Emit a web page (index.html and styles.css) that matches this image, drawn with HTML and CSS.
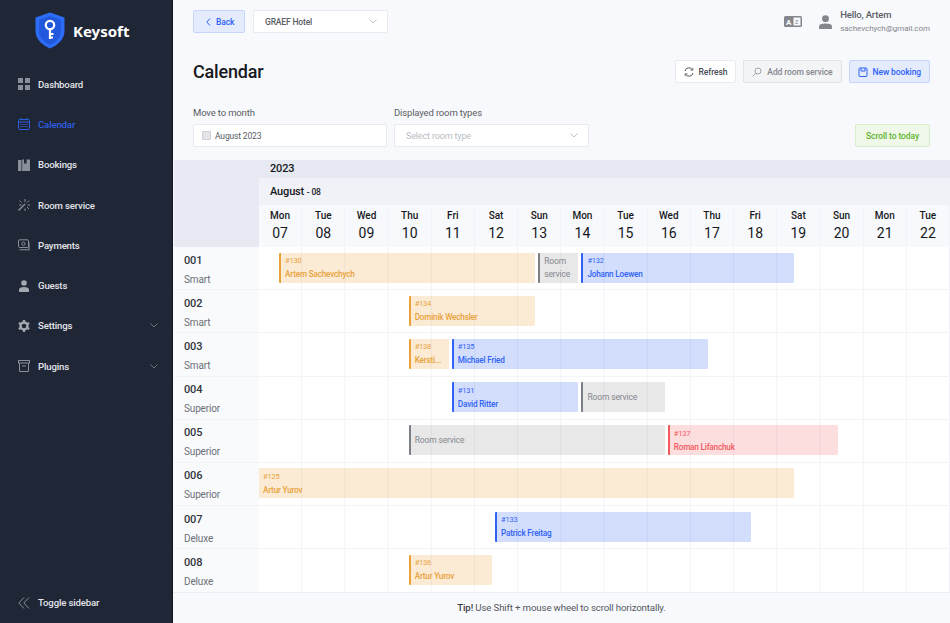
FILE: index.html
```html
<!DOCTYPE html>
<html lang="en">
<head>
  <meta charset="UTF-8">
  <title>Keysoft - Calendar</title>
  <link rel="stylesheet" href="styles.css">
</head>
<body>
  <aside class="sidebar">
    <div class="logo">
      <svg width="30" height="37" viewBox="0 0 30 37">
        <path d="M15 0.5 L29.5 5.5 V19 C29.5 27 23 33 15 36.5 C7 33 0.5 27 0.5 19 V5.5 Z" fill="#2c6cf6"/>
        <path d="M15 4 L26 8 V19 C26 25.5 21 30 15 33 C9 30 4 25.5 4 19 V8 Z" fill="#2258dc"/>
        <circle cx="15" cy="13" r="4.2" fill="none" stroke="#fff" stroke-width="2.2"/>
        <path d="M15 17 V27 M15 22 H18.5 M15 25.5 H18" fill="none" stroke="#fff" stroke-width="2.2"/>
      </svg>
      <span class="logo-text">Keysoft</span>
    </div>
    <nav class="nav">
      <a class="nav-item">
        <svg class="nav-icon" viewBox="0 0 12 12" fill="#8a8f9a"><rect width="5" height="5"/><rect x="7" width="5" height="5"/><rect y="7" width="5" height="5"/><rect x="7" y="7" width="5" height="5"/></svg>
        Dashboard
      </a>
      <a class="nav-item active">
        <svg class="nav-icon" viewBox="0 0 12 12" fill="none" stroke="#2f5fe0"><rect x="0.5" y="1.5" width="11" height="10" rx="1"/><path d="M0.5 4 H11.5 M3 0 V2 M9 0 V2"/><path d="M2.5 6.5 H9.5 M2.5 8.5 H9.5" stroke-dasharray="1 1"/></svg>
        Calendar
      </a>
      <a class="nav-item">
        <svg class="nav-icon" viewBox="0 0 12 12" fill="#8a8f9a"><path d="M0 1 H3.5 V12 H0 Z M4.2 0.5 H6 V5 L7.3 4 L8.6 5 V0.5 H12 V12 H4.2 Z"/></svg>
        Bookings
      </a>
      <a class="nav-item">
        <svg class="nav-icon" viewBox="0 0 12 12" fill="none" stroke="#8a8f9a"><path d="M7 5 L0.5 11.5" stroke-width="1.4"/><path d="M7 0 V3 M11 1.5 L9 3.5 M12 6 H9.5 M11 10 L9 8 M7 12 V9.5 M1.5 1.5 L3.5 3.5 M1 6 H3.5"/></svg>
        Room service
      </a>
      <a class="nav-item">
        <svg class="nav-icon" viewBox="0 0 12 12" fill="none" stroke="#8a8f9a"><rect x="0.5" y="0.8" width="10" height="7.7" rx="1.2"/><circle cx="5.5" cy="4.7" r="1.6"/><path d="M1.5 10.8 H11 V3.5" stroke-width="1.1"/></svg>
        Payments
      </a>
      <a class="nav-item">
        <svg class="nav-icon" viewBox="0 0 12 12" fill="#a4a8b0"><circle cx="6" cy="3" r="2.8"/><path d="M1 12 V9.5 C1 8 3 7 6 7 C9 7 11 8 11 9.5 V12 Z"/></svg>
        Guests
      </a>
      <a class="nav-item">
        <svg class="nav-icon" viewBox="0 0 12 12"><circle cx="6" cy="6" r="3.5" fill="none" stroke="#a4a8b0" stroke-width="2.4"/><path d="M6 0 V2 M6 10 V12 M0.8 3 L2.6 4 M9.4 8 L11.2 9 M0.8 9 L2.6 8 M9.4 4 L11.2 3" stroke="#a4a8b0" stroke-width="2.2"/></svg>
        Settings
        <svg class="nav-chevron" viewBox="0 0 8 5" fill="none" stroke="#6f7480"><path d="M0.5 0.5 L4 4 L7.5 0.5"/></svg>
      </a>
      <a class="nav-item">
        <svg class="nav-icon" viewBox="0 0 12 12" fill="none" stroke="#8a8f9a"><rect x="0.5" y="0.5" width="11" height="2.5"/><path d="M1.5 3 V11.5 H10.5 V3 M4 6 H8"/></svg>
        Plugins
        <svg class="nav-chevron" viewBox="0 0 8 5" fill="none" stroke="#6f7480"><path d="M0.5 0.5 L4 4 L7.5 0.5"/></svg>
      </a>
    </nav>
    <a class="nav-item">
      <svg class="nav-icon" viewBox="0 0 12 12" fill="none" stroke="#8a8f9a"><path d="M6 0.5 L0.8 6 L6 11.5 M11 0.5 L5.8 6 L11 11.5"/></svg>
      Toggle sidebar
    </a>
  </aside>

  <main class="main">
    <header class="topbar">
      <button class="btn btn-blue btn-back">
        <svg class="btn-icon-sm" viewBox="0 0 5 8" fill="none" stroke="#2f62f5"><path d="M4 0.5 L0.8 4 L4 7.5"/></svg>
        Back
      </button>
      <div class="select select-hotel">
        <span>GRAEF Hotel</span>
        <svg class="select-chevron" viewBox="0 0 8 5" fill="none" stroke="#9ea3ad" stroke-width="0.7"><path d="M0.5 0.5 L4 4 L7.5 0.5"/></svg>
      </div>
      <div class="spacer"></div>
      <svg class="lang-icon" width="18" height="11" viewBox="0 0 18 11"><rect width="18" height="11" rx="1.5" fill="#85878d"/><rect x="9.5" y="1.5" width="7" height="8" fill="#f8f9fc"/><text x="2" y="8.5" font-size="8" font-weight="700" fill="#fff" font-family="Roboto">A</text><text x="11" y="8" font-size="6.5" fill="#85878d" font-family="Roboto">z</text></svg>
      <svg class="user-icon" width="13" height="14" viewBox="0 0 12 13" fill="#85878d"><circle cx="6" cy="3.4" r="3.2"/><path d="M0 13 V10.5 C0 9 2 8 6 8 C10 8 12 9 12 10.5 V13 Z"/></svg>
      <div class="user">
        <div class="user-name">Hello, Artem</div>
        <div class="user-mail">sachevchych@gmail.com</div>
      </div>
    </header>

    <section class="page-head">
      <h1 class="title">Calendar</h1>
      <div class="actions">
        <button class="btn">
          <svg class="btn-icon" viewBox="0 0 10 10" fill="none" stroke="#55585f"><path d="M1 4 A4 4 0 0 1 8.5 3 M9 6 A4 4 0 0 1 1.5 7"/><path d="M8.8 0.8 V3.2 H6.5 M1.2 9.2 V6.8 H3.5" stroke-width="0.8"/></svg>
          Refresh
        </button>
        <button class="btn btn-gray">
          <svg class="btn-icon" viewBox="0 0 10 10" fill="none" stroke="#a2a4a9"><circle cx="6" cy="4" r="3"/><path d="M3.8 6.2 L0.5 9.5"/></svg>
          Add room service
        </button>
        <button class="btn btn-blue">
          <svg class="btn-icon" viewBox="0 0 10 10" fill="none" stroke="#2f62f5"><rect x="1" y="1" width="8" height="8.5" rx="1"/><path d="M3 1 V4 H7 V1"/></svg>
          New booking
        </button>
      </div>
    </section>

    <section class="filters">
      <div class="field field-month">
        <label class="field-label">Move to month</label>
        <div class="select">
          <span class="box-icon"></span>
          <span>August 2023</span>
        </div>
      </div>
      <div class="field field-types">
        <label class="field-label">Displayed room types</label>
        <div class="select select-empty">
          <span>Select room type</span>
          <svg class="select-chevron" viewBox="0 0 8 5" fill="none" stroke="#9ea3ad" stroke-width="0.7"><path d="M0.5 0.5 L4 4 L7.5 0.5"/></svg>
        </div>
      </div>
      <div class="spacer"></div>
      <button class="btn btn-green">Scroll to today</button>
    </section>

    <section class="calendar">
      <div class="cal-head">
        <div class="cal-corner"></div>
        <div class="cal-dates">
          <div class="cal-year">2023</div>
          <div class="cal-month">August <small>- 08</small></div>
          <div class="cal-days">
            <div class="day"><b>Mon</b><span>07</span></div>
            <div class="day"><b>Tue</b><span>08</span></div>
            <div class="day"><b>Wed</b><span>09</span></div>
            <div class="day"><b>Thu</b><span>10</span></div>
            <div class="day"><b>Fri</b><span>11</span></div>
            <div class="day"><b>Sat</b><span>12</span></div>
            <div class="day"><b>Sun</b><span>13</span></div>
            <div class="day"><b>Mon</b><span>14</span></div>
            <div class="day"><b>Tue</b><span>15</span></div>
            <div class="day"><b>Wed</b><span>16</span></div>
            <div class="day"><b>Thu</b><span>17</span></div>
            <div class="day"><b>Fri</b><span>18</span></div>
            <div class="day"><b>Sat</b><span>19</span></div>
            <div class="day"><b>Sun</b><span>20</span></div>
            <div class="day"><b>Mon</b><span>21</span></div>
            <div class="day"><b>Tue</b><span>22</span></div>
          </div>
        </div>
      </div>

      <div class="cal-row">
        <div class="room"><b>001</b><span>Smart</span></div>
        <div class="track">
          <div class="bar orange" style="grid-column: 2 / 14"><i>#130</i><b>Artem Sachevchych</b></div>
          <div class="bar gray wrap" style="grid-column: 14 / 16">Room service</div>
          <div class="bar blue" style="grid-column: 16 / 26"><i>#132</i><b>Johann Loewen</b></div>
        </div>
      </div>
      <div class="cal-row">
        <div class="room"><b>002</b><span>Smart</span></div>
        <div class="track">
          <div class="bar orange" style="grid-column: 8 / 14"><i>#134</i><b>Dominik Wechsler</b></div>
        </div>
      </div>
      <div class="cal-row">
        <div class="room"><b>003</b><span>Smart</span></div>
        <div class="track">
          <div class="bar orange" style="grid-column: 8 / 10"><i>#138</i><b>Kersti...</b></div>
          <div class="bar blue" style="grid-column: 10 / 22"><i>#135</i><b>Michael Fried</b></div>
        </div>
      </div>
      <div class="cal-row">
        <div class="room"><b>004</b><span>Superior</span></div>
        <div class="track">
          <div class="bar blue" style="grid-column: 10 / 16"><i>#131</i><b>David Ritter</b></div>
          <div class="bar gray" style="grid-column: 16 / 20">Room service</div>
        </div>
      </div>
      <div class="cal-row">
        <div class="room"><b>005</b><span>Superior</span></div>
        <div class="track">
          <div class="bar gray" style="grid-column: 8 / 20">Room service</div>
          <div class="bar red" style="grid-column: 20 / 28"><i>#137</i><b>Roman Lifanchuk</b></div>
        </div>
      </div>
      <div class="cal-row">
        <div class="room"><b>006</b><span>Superior</span></div>
        <div class="track">
          <div class="bar orange cut" style="grid-column: 1 / 26"><i>#125</i><b>Artur Yurov</b></div>
        </div>
      </div>
      <div class="cal-row">
        <div class="room"><b>007</b><span>Deluxe</span></div>
        <div class="track">
          <div class="bar blue" style="grid-column: 12 / 24"><i>#133</i><b>Patrick Freitag</b></div>
        </div>
      </div>
      <div class="cal-row">
        <div class="room"><b>008</b><span>Deluxe</span></div>
        <div class="track">
          <div class="bar orange" style="grid-column: 8 / 12"><i>#136</i><b>Artur Yurov</b></div>
        </div>
      </div>
    </section>

    <footer class="tip"><b>Tip!</b>&nbsp;Use Shift + mouse wheel to scroll horizontally.</footer>
  </main>
</body>
</html>
```

FILE: styles.css
```css
* { box-sizing: border-box; }

html, body { height: 100%; margin: 0; }

body {
  display: flex;
  overflow: hidden;
  font-family: Roboto, "Noto Sans", sans-serif;
  font-size: 10px;
  letter-spacing: -0.15px;
  color: #3d4047;
  background: #f8f9fc;
}

/* sidebar */
.sidebar {
  display: flex;
  flex-direction: column;
  flex: 0 0 173px;
  padding-top: 12px;
  background: #1f2636;
  border-right: 1px solid #12151d;
}
.logo { display: flex; align-items: center; gap: 8px; padding-left: 35px; height: 37px; }
.logo-text { font-family: "Noto Sans", sans-serif; font-size: 15px; font-weight: 700; letter-spacing: 0; color: #fff; }
.nav { display: flex; flex-direction: column; margin-top: 15px; flex: 1; }
.nav-item {
  display: flex;
  align-items: center;
  gap: 8px;
  height: 40.3px;
  padding: 0 14px 0 18px;
  font-size: 9.6px;
  font-weight: 500;
  color: #e3e5ea;
}
.nav-item.active { color: #2f5fe0; }
.nav-icon { width: 12px; height: 12px; flex: none; }
.nav-chevron { width: 8px; height: 5px; margin-left: auto; }

/* main */
.main { display: flex; flex-direction: column; flex: 1; min-width: 0; }
.spacer { flex: 1; }

.topbar { display: flex; align-items: center; height: 43px; padding: 0 20px; }
.btn {
  display: flex;
  align-items: center;
  gap: 5px;
  height: 23px;
  padding: 0 8px;
  font: 500 8.5px Roboto, "Noto Sans", sans-serif;
  letter-spacing: -0.1px;
  color: #4a4d54;
  background: #fff;
  border: 1px solid #e8eaf0;
  border-radius: 2px;
}
.btn-blue { color: #2f62f5; background: #e3ebfd; border-color: #c5d5fb; }
.btn-gray { color: #85878d; background: #f3f4f6; border-color: #e2e3e7; }
.btn-green { width: 75px; justify-content: center; padding: 0; color: #62b52f; background: #eff8e9; border-color: #d6eecb; }
.btn-back { width: 52px; padding-left: 12px; margin-right: 8px; }
.btn-icon { width: 10px; height: 10px; flex: none; }
.btn-icon-sm { width: 5px; height: 8px; flex: none; }

.select {
  display: flex;
  align-items: center;
  gap: 4px;
  height: 23px;
  padding: 0 8px;
  font-size: 8.5px;
  color: #5a5d64;
  background: #fff;
  border: 1px solid #e8eaf0;
  border-radius: 2px;
}
.select-hotel { width: 135px; padding-left: 11px; font-weight: 500; }
.select-empty { padding-left: 11px; font-size: 9px; color: #b9bcc4; }
.select-chevron { width: 8px; height: 5px; margin-left: auto; margin-right: 2px; }
.box-icon { width: 9px; height: 9px; background: #e4e5e9; border: 1px solid #cfd1d6; border-radius: 1px; }

.lang-icon { margin-right: 17px; }
.user-icon { margin-right: 8px; }
.user-name { font-size: 9.5px; font-weight: 500; color: #5a5d64; line-height: 14px; }
.user-mail { font-size: 8px; letter-spacing: -0.05px; color: #85878d; line-height: 14px; }

.page-head { display: flex; align-items: center; justify-content: space-between; height: 23px; margin-top: 17px; padding: 0 20px; }
.title { margin: 0; font-size: 18px; font-weight: 500; letter-spacing: -0.2px; color: #17191d; }
.actions { display: flex; gap: 7px; }

.filters { display: flex; align-items: flex-end; gap: 7px; margin-top: 23px; padding: 0 20px; }
.field-label { display: block; margin-bottom: 5px; font-size: 9.5px; color: #5a5d64; line-height: 13px; }
.field-month { width: 194px; }
.field-types { width: 195px; }

/* calendar */
.calendar { flex: 1; margin: 13px 0 0 1px; overflow: hidden; }
.cal-head { display: flex; }
.cal-corner { flex: 0 0 85px; background: #e7eaf2; }
.cal-dates { flex: 1; min-width: 0; }
.cal-year { height: 18px; padding-left: 11px; font-size: 11px; font-weight: 500; line-height: 18px; color: #17191d; background: #e6e9f1; }
.cal-month { height: 27px; padding-left: 11px; font-size: 11px; font-weight: 500; line-height: 27px; color: #17191d; background: #f0f2f7; }
.cal-month small { font-size: 8.5px; }
.cal-days { display: grid; grid-template-columns: repeat(16, 43.2px); height: 42px; }
.day { display: flex; flex-direction: column; align-items: center; padding-top: 4px; border-right: 1px solid #f1f3f8; }
.day b { font-size: 10px; font-weight: 500; line-height: 13px; letter-spacing: 0; color: #17191d; }
.day span { font-size: 14px; line-height: 23px; letter-spacing: 0; color: #17191d; }

.cal-row { display: flex; height: 43.2px; border-bottom: 1px solid #f2f4f8; }
.room { flex: 0 0 85px; display: flex; flex-direction: column; padding: 4.5px 0 0 10px; background: #f9fafc; }
.room b { font-size: 11px; font-weight: 500; line-height: 18px; color: #33363c; }
.room span { font-size: 10px; line-height: 19px; color: #6d7077; }

.track {
  flex: 1;
  min-width: 0;
  display: grid;
  grid-template-columns: repeat(32, 21.6px);
  align-items: start;
  background-color: #fff;
  background-image: linear-gradient(to right, transparent 42.2px, #f1f3f8 42.2px);
  background-size: 43.2px 100%;
}
.bar {
  display: flex;
  flex-direction: column;
  justify-content: center;
  height: 30px;
  margin: 5.5px 4.5px 0 -1.5px;
  padding: 0 4px;
  overflow: hidden;
  border-left: 2px solid;
  border-radius: 1px;
  white-space: nowrap;
}
.bar i { font-style: normal; font-size: 7.5px; letter-spacing: -0.2px; line-height: 13px; }
.bar b { font-size: 8.2px; font-weight: 500; letter-spacing: -0.2px; line-height: 14px; }
.orange { color: #e9a23b; background: rgba(240, 170, 80, 0.24); border-color: #e9a23b; }
.blue { color: #2f62f5; background: rgba(47, 98, 245, 0.21); border-color: #2f62f5; }
.red { color: #f25a5e; background: rgba(245, 80, 85, 0.19); border-color: #f25a5e; }
.gray { color: #85878d; font-size: 8.5px; background: rgba(100, 102, 110, 0.15); border-color: #7d7f86; }
.wrap { white-space: normal; line-height: 13px; }
.cut { margin-left: 0; border-left: 0; }

.tip {
  display: flex;
  align-items: center;
  justify-content: center;
  height: 31px;
  padding-bottom: 2px;
  font-size: 9.7px;
  color: #55585f;
  background: #f8f9fc;
  border-top: 1px solid #eceef3;
}
.tip b { font-weight: 500; color: #3d4047; }
```
